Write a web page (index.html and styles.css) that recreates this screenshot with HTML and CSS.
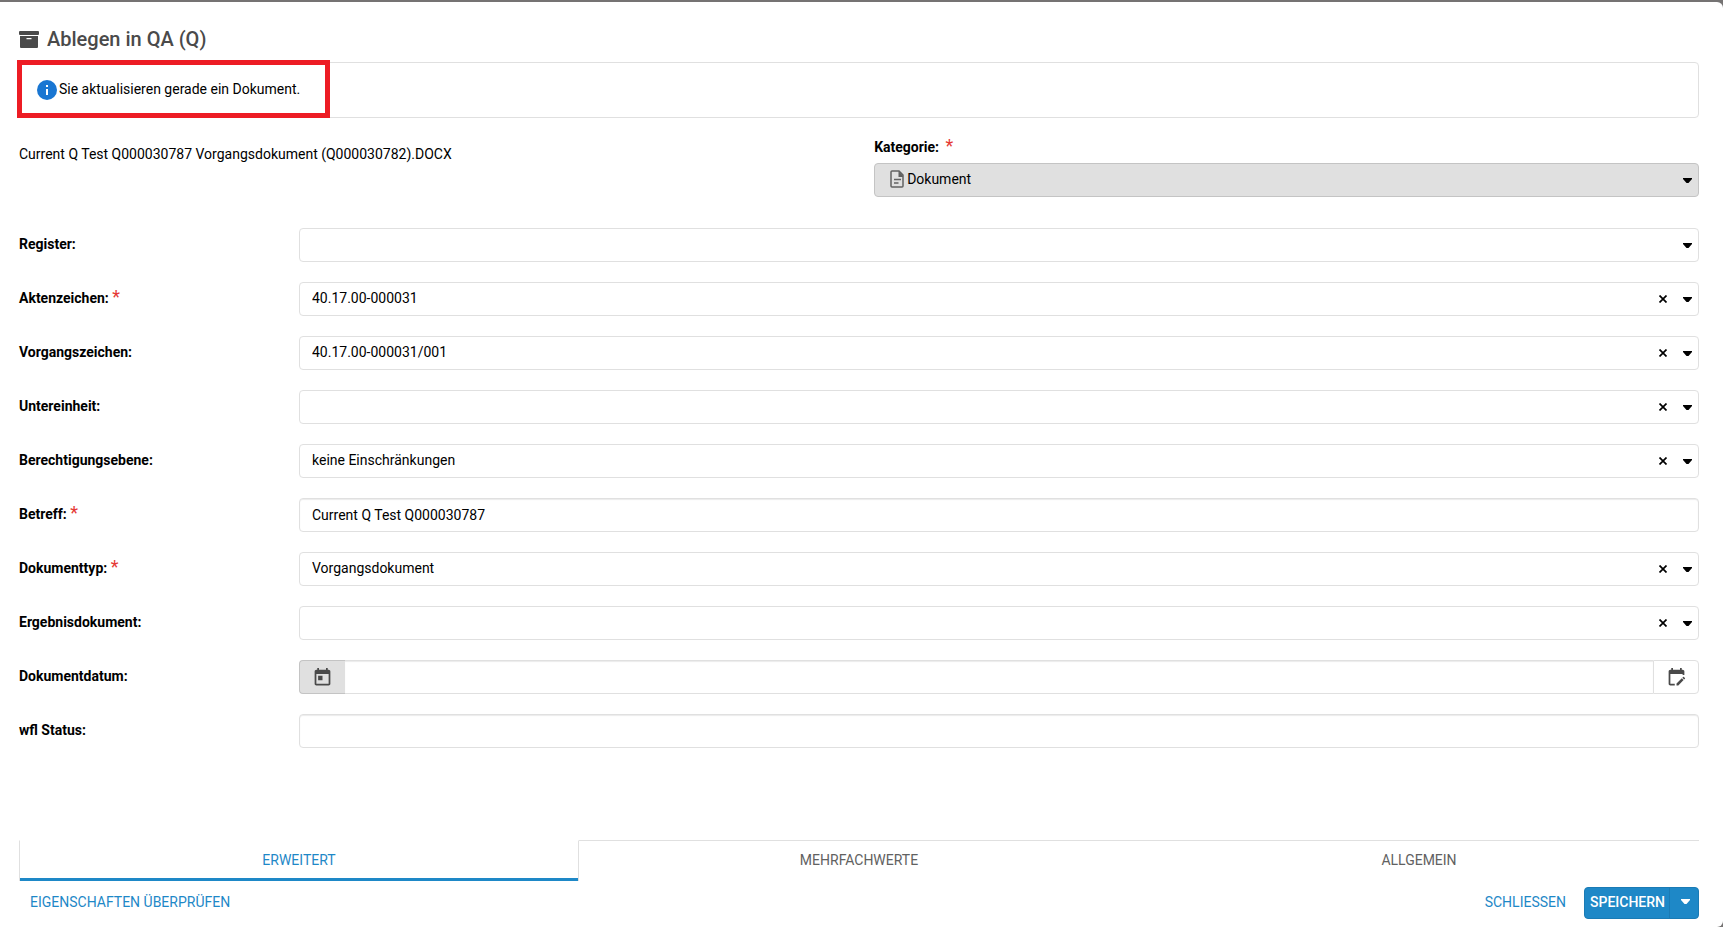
FILE: index.html
```
<!DOCTYPE html>
<html lang="de">
<head>
    <meta charset="UTF-8">
    <title>Ablegen in QA (Q)</title>
    <meta name="viewport" content="width=device-width, initial-scale=1.0">
    <link rel="stylesheet" href="styles.css">
</head>
<body>
    <!-- shared icons -->
    <svg class="sprite" width="0" height="0" aria-hidden="true">
        <symbol id="caret" viewBox="0 0 9 5"><path d="M0 0H9V1L5.500 5H3.500L0 1Z"/></symbol>
        <symbol id="clear" viewBox="0 0 8 8"><path d="M.5 .5L7.500 7.500M7.500 .5L.5 7.500" fill="none" stroke="currentColor" stroke-width="1.700"/></symbol>
    </svg>

    <form class="dialog" onsubmit="return false">
        <header class="dialog-header">
            <svg class="archive-icon" viewBox="0 0 20 17" aria-hidden="true">
                <rect width="20" height="4" rx="1"/>
                <path fill-rule="evenodd" d="M1 5H19V16Q19 17 18 17H2Q1 17 1 16ZM7.500 7V8.200H12.500V7Z"/>
            </svg>
            <h1>Ablegen in QA (Q)</h1>
        </header>

        <div class="message">
            <svg class="info-icon" viewBox="0 0 20 20" aria-hidden="true">
                <circle cx="10" cy="10" r="10" fill="#1976d2"/>
                <path d="M9 5H11V7H9ZM9 9H11V15H9Z" fill="#fff"/>
            </svg>
            <span class="message-text">Sie aktualisieren gerade ein Dokument.</span>
            <div class="highlight"></div>
        </div>

        <div class="document">
            <div class="file-name">Current Q Test Q000030787 Vorgangsdokument (Q000030782).DOCX</div>
            <div class="category">
                <label for="kategorie">Kategorie: <span class="required">*</span></label>
                <div class="combo combo-category">
                    <svg class="doc-icon" viewBox="0 0 14 18" aria-hidden="true">
                        <path d="M1 2Q1 1 2 1H9L13 5V16Q13 17 12 17H2Q1 17 1 16Z" fill="none" stroke="#616161" stroke-width="1.500"/>
                        <path d="M8.500 1L13 5.500V7H8.500Z" fill="#616161"/>
                        <path d="M4 9.500H11M4 13H8.500" stroke="#616161" stroke-width="1.300"/>
                    </svg>
                    <select id="kategorie"><option>Dokument</option></select>
                    <svg class="caret"><use href="#caret"/></svg>
                </div>
            </div>
        </div>

        <div class="fields">
            <div class="row">
                <label for="register">Register:</label>
                <div class="combo">
                    <select id="register"><option></option></select>
                    <svg class="caret"><use href="#caret"/></svg>
                </div>
            </div>
            <div class="row">
                <label for="aktenzeichen">Aktenzeichen: <span class="required">*</span></label>
                <div class="combo">
                    <select id="aktenzeichen"><option>40.17.00-000031</option></select>
                    <button type="button" class="clear" aria-label="Leeren"><svg><use href="#clear"/></svg></button>
                    <svg class="caret"><use href="#caret"/></svg>
                </div>
            </div>
            <div class="row">
                <label for="vorgangszeichen">Vorgangszeichen:</label>
                <div class="combo">
                    <select id="vorgangszeichen"><option>40.17.00-000031/001</option></select>
                    <button type="button" class="clear" aria-label="Leeren"><svg><use href="#clear"/></svg></button>
                    <svg class="caret"><use href="#caret"/></svg>
                </div>
            </div>
            <div class="row">
                <label for="untereinheit">Untereinheit:</label>
                <div class="combo">
                    <select id="untereinheit"><option></option></select>
                    <button type="button" class="clear" aria-label="Leeren"><svg><use href="#clear"/></svg></button>
                    <svg class="caret"><use href="#caret"/></svg>
                </div>
            </div>
            <div class="row">
                <label for="berechtigung">Berechtigungsebene:</label>
                <div class="combo">
                    <select id="berechtigung"><option>keine Einschränkungen</option></select>
                    <button type="button" class="clear" aria-label="Leeren"><svg><use href="#clear"/></svg></button>
                    <svg class="caret"><use href="#caret"/></svg>
                </div>
            </div>
            <div class="row">
                <label for="betreff">Betreff: <span class="required">*</span></label>
                <input type="text" id="betreff" value="Current Q Test Q000030787">
            </div>
            <div class="row">
                <label for="dokumenttyp">Dokumenttyp: <span class="required">*</span></label>
                <div class="combo">
                    <select id="dokumenttyp"><option>Vorgangsdokument</option></select>
                    <button type="button" class="clear" aria-label="Leeren"><svg><use href="#clear"/></svg></button>
                    <svg class="caret"><use href="#caret"/></svg>
                </div>
            </div>
            <div class="row">
                <label for="ergebnis">Ergebnisdokument:</label>
                <div class="combo">
                    <select id="ergebnis"><option></option></select>
                    <button type="button" class="clear" aria-label="Leeren"><svg><use href="#clear"/></svg></button>
                    <svg class="caret"><use href="#caret"/></svg>
                </div>
            </div>
            <div class="row">
                <label for="datum">Dokumentdatum:</label>
                <div class="date-group">
                    <button type="button" class="date-button date-today" aria-label="Kalender">
                        <svg viewBox="0 0 24 24"><path d="M7 10H12V15H7M19 19H5V8H19M19 3H18V1H16V3H8V1H6V3H5C3.900 3 3 3.900 3 5V19C3 20.100 3.900 21 5 21H19C20.100 21 21 20.100 21 19V5C21 3.900 20.100 3 19 3Z"/></svg>
                    </button>
                    <input type="text" id="datum">
                    <button type="button" class="date-button date-edit" aria-label="Datum bearbeiten">
                        <svg viewBox="0 0 24 24"><path d="M19 3H18V1H16V3H8V1H6V3H5C3.900 3 3 3.900 3 5V19C3 20.100 3.900 21 5 21H10V19H5V8H19V9H21V5C21 3.900 20.100 3 19 3M21.700 13.350L20.700 14.350L18.650 12.350L19.650 11.350C19.850 11.140 20.190 11.130 20.420 11.350L21.700 12.630C21.890 12.830 21.890 13.150 21.700 13.350M12 18.940L18.070 12.880L20.120 14.880L14.060 21H12V18.940Z"/></svg>
                    </button>
                </div>
            </div>
            <div class="row">
                <label for="status">wfl Status:</label>
                <input type="text" id="status">
            </div>
        </div>

        <div class="tabs" role="tablist">
            <button type="button" class="tab active" role="tab" aria-selected="true">ERWEITERT</button>
            <button type="button" class="tab" role="tab" aria-selected="false">MEHRFACHWERTE</button>
            <button type="button" class="tab" role="tab" aria-selected="false">ALLGEMEIN</button>
        </div>

        <footer class="dialog-footer">
            <button type="button" class="link-button check">EIGENSCHAFTEN ÜBERPRÜFEN</button>
            <button type="button" class="link-button">SCHLIESSEN</button>
            <div class="save-group">
                <button type="submit" class="save">SPEICHERN</button>
                <button type="button" class="save-more" aria-label="Weitere Optionen"><svg><use href="#caret"/></svg></button>
            </div>
        </footer>
    </form>
</body>
</html>
```
FILE: styles.css
```
* {
    margin: 0;
    padding: 0;
    box-sizing: border-box;
}
body {
    font-family: Roboto, "Liberation Sans", sans-serif;
    font-size: 14px;
    line-height: 20px;
    color: #000;
    background: #757373;
    padding-top: 2px;
}
button, input, select {
    font: inherit;
    color: inherit;
}
button {
    border: none;
    background: none;
    cursor: pointer;
}
.sprite {
    position: absolute;
}
.dialog {
    display: flex;
    flex-direction: column;
    min-height: calc(100vh - 2px);
    padding: 24px 24px 8px 19px;
    background: #fff;
    border-radius: 0 6px 6px 0;
}
.dialog-header {
    display: flex;
    align-items: center;
    gap: 8px;
    height: 26px;
    margin-bottom: 10px;
    color: #4a4a4a;
}
.dialog-header h1 {
    font-size: 20px;
    font-weight: 500;
}
.archive-icon {
    width: 20px;
    height: 17px;
    fill: #4a4a4a;
}

/* info message */
.message {
    position: relative;
    display: flex;
    align-items: center;
    gap: 2px;
    height: 56px;
    padding: 0 17px;
    border: 1px solid #e0e0e0;
    border-radius: 4px;
}
.message-text {
    padding-bottom: 2px;
}
.info-icon {
    width: 20px;
    height: 20px;
}
.highlight {
    position: absolute;
    top: -3px;
    left: -3px;
    width: 313px;
    height: 58px;
    border: 5px solid #ed1c24;
}

/* file and category */
.document {
    display: flex;
    justify-content: space-between;
    margin: 19px 0 31px;
}
.file-name {
    padding-top: 7px;
}
.category {
    width: 49.1%;
}
.category label {
    display: block;
    margin-bottom: 6px;
}
.category .required {
    margin-left: 3px;
}
label {
    font-weight: 700;
}
.required {
    color: #e53935;
    font-size: 18px;
    font-weight: 400;
    line-height: 16px;
}

/* form fields */
.fields {
    display: flex;
    flex: 1;
    flex-direction: column;
    gap: 20px;
    margin-bottom: 24px;
}
.row {
    display: grid;
    grid-template-columns: 1fr 5fr;
}
.row label {
    height: 34px;
    line-height: 32px;
}
input, select {
    width: 100%;
    height: 34px;
    padding: 0 12px;
    border: 1px solid #e0e0e0;
    border-radius: 4px;
    background: #fff;
}
input {
    box-shadow: inset 0 1px 1px rgba(0, 0, 0, 0.08);
}
select {
    appearance: none;
    padding-bottom: 2px;
}
.combo {
    position: relative;
    height: 34px;
}
.caret {
    position: absolute;
    top: 15px;
    right: 7px;
    width: 9px;
    height: 5px;
    pointer-events: none;
}
.clear {
    position: absolute;
    top: 9px;
    right: 28px;
    display: flex;
    align-items: center;
    justify-content: center;
    width: 16px;
    height: 16px;
}
.clear svg {
    width: 8px;
    height: 8px;
}
.combo-category select {
    padding-left: 32px;
    background: #e0e0e0;
    border-color: #c4c4c4;
}
.doc-icon {
    position: absolute;
    top: 7px;
    left: 16px;
    width: 14px;
    height: 18px;
}
.date-group {
    display: flex;
}
.date-group input {
    flex: 1;
    border-width: 1px 0;
    border-radius: 0;
}
.date-button {
    display: flex;
    align-items: center;
    justify-content: center;
    width: 46px;
    height: 34px;
    border: 1px solid #e0e0e0;
}
.date-button svg {
    width: 21px;
    height: 21px;
    fill: #4a4a4a;
}
.date-today {
    background: #e0e0e0;
    border-color: #c4c4c4;
    border-right: none;
    border-radius: 4px 0 0 4px;
}
.date-edit {
    border-radius: 0 4px 4px 0;
}

/* tabs */
.tabs {
    display: grid;
    grid-template-columns: repeat(3, 1fr);
}
.tab {
    height: 41px;
    padding-bottom: 2px;
    border-top: 1px solid #e0e0e0;
    color: #616161;
}
.tab.active {
    border-top-color: transparent;
    border-left: 1px solid #e0e0e0;
    border-right: 1px solid #e0e0e0;
    box-shadow: inset 0 -3px #1e88c7;
    color: #1e88c7;
}

.dialog-footer {
    display: flex;
    align-items: center;
    margin-top: 6px;
}
.link-button {
    height: 32px;
    padding-bottom: 2px;
    color: #1e88c7;
}
.check {
    margin-left: 11px;
    margin-right: auto;
}
.save-group {
    display: flex;
    height: 32px;
    margin-left: 18px;
    border: 1px solid #1a7bb5;
    border-radius: 4px;
    background: #1e88c7;
    color: #fff;
}
.save {
    padding: 0 4px 2px 5px;
    font-weight: 500;
}
.save-more {
    width: 29px;
    padding-left: 3px;
    border-left: 1px solid #1a7bb5;
}
.save-more svg {
    display: block;
    width: 9px;
    height: 5px;
    margin: 0 auto 4px;
    fill: #fff;
}
```
